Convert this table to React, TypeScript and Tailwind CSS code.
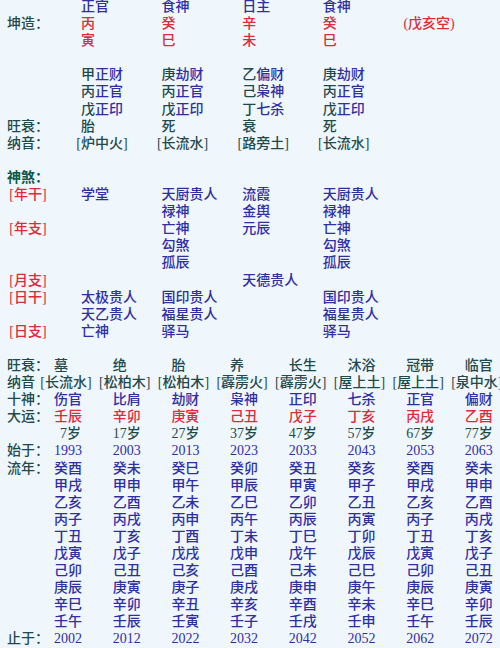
import React from "react";

const STEMS = "甲乙丙丁戊己庚辛壬癸";
const BRANCHES = "子丑寅卯辰巳午未申酉戌亥";

const ganzhi = (y: number) => STEMS[(y - 4) % 10] + BRANCHES[(y - 4) % 12];

const TEAL = "text-[#1f4a4c]";
const BLUE = "text-[#2f2fa4]";
const RED = "text-[#de2a3a]";

type Cell = React.ReactNode;

function Br({ children }: { children: React.ReactNode }) {
  return (
    <>
      <span className="inline-block w-[7px] text-right">[</span>
      {children}
      <span className="inline-block w-[7px] text-left">]</span>
    </>
  );
}

// top half: 4 pillars, 80.6px columns
function TopRow({ label, cells, color, labelColor = TEAL, shift = false }: { label?: Cell; cells: Cell[]; color: string; labelColor?: string; shift?: boolean }) {
  return (
    <div className="flex h-[17.1px]">
      <div className={`w-[74px] shrink-0 ${labelColor}`}>{label}</div>
      {cells.map((c, i) => (
        <div key={i} className={`w-[80.6px] shrink-0 whitespace-nowrap ${color} ${shift ? "-ml-[7px] mr-[7px]" : ""}`}>
          {c}
        </div>
      ))}
    </div>
  );
}

function Empty() {
  return <div className="h-[17.1px]" />;
}

function Stem({ s, rest }: { s: string; rest: string }) {
  return (
    <>
      <span className={TEAL}>{s}</span>
      <span className={BLUE}>{rest}</span>
    </>
  );
}

// bottom half: 8 luck columns, 58.7px columns
function LuckRow({ label, cells, color, labelW = "w-[47px]" }: { label?: Cell; cells: Cell[]; color: string; labelW?: string }) {
  return (
    <div className="flex h-[17.1px]">
      <div className={`${labelW} shrink-0 ${TEAL}`}>{label}</div>
      {cells.map((c, i) => (
        <div key={i} className={`w-[58.7px] shrink-0 whitespace-nowrap ${color}`}>
          {c}
        </div>
      ))}
    </div>
  );
}

const shensha: [string | null, string[]][] = [
  ["年干", ["学堂", "天厨贵人", "流霞", "天厨贵人"]],
  [null, ["", "禄神", "金舆", "禄神"]],
  ["年支", ["", "亡神", "元辰", "亡神"]],
  [null, ["", "勾煞", "", "勾煞"]],
  [null, ["", "孤辰", "", "孤辰"]],
  ["月支", ["", "", "天德贵人", ""]],
  ["日干", ["太极贵人", "国印贵人", "", "国印贵人"]],
  [null, ["天乙贵人", "福星贵人", "", "福星贵人"]],
  ["日支", ["亡神", "驿马", "", "驿马"]],
];

const starts = [1993, 2003, 2013, 2023, 2033, 2043, 2053, 2063];

export default function App() {
  return (
    <div
      className="w-[500px] h-[648px] overflow-hidden bg-[#eff6fc] pl-[7px] text-[14px] leading-[17.1px] font-medium"
      style={{ fontFamily: '"Liberation Serif", "Noto Sans CJK SC", serif' }}
    >
      <div className="-mt-[2px]">
        <TopRow cells={["正官", "食神", "日主", "食神"]} color={BLUE} />
        <TopRow label="坤造：" cells={["丙", "癸", "辛", "癸", "(戊亥空)"]} color={RED} />
        <TopRow cells={["寅", "巳", "未", "巳"]} color={RED} />
        <Empty />
        <TopRow cells={[<Stem s="甲" rest="正财" />, <Stem s="庚" rest="劫财" />, <Stem s="乙" rest="偏财" />, <Stem s="庚" rest="劫财" />]} color={BLUE} />
        <TopRow cells={[<Stem s="丙" rest="正官" />, <Stem s="丙" rest="正官" />, <Stem s="己" rest="枭神" />, <Stem s="丙" rest="正官" />]} color={BLUE} />
        <TopRow cells={[<Stem s="戊" rest="正印" />, <Stem s="戊" rest="正印" />, <Stem s="丁" rest="七杀" />, <Stem s="戊" rest="正印" />]} color={BLUE} />
        <TopRow label="旺衰：" cells={["胎", "死", "衰", "死"]} color={TEAL} />
        <TopRow
          label="纳音："
          cells={["炉中火", "长流水", "路旁土", "长流水"].map((n) => <Br>{n}</Br>)}
          color={TEAL}
          shift
        />
        <Empty />

        <div className="h-[17.1px] text-[#0e5848] font-semibold">神煞：</div>
        {shensha.map(([l, cs], i) => (
          <TopRow key={i} label={l ? <Br>{l}</Br> : null} labelColor={RED} cells={cs} color={BLUE} />
        ))}
        <Empty />

        <LuckRow label="旺衰：" cells={["墓", "绝", "胎", "养", "长生", "沐浴", "冠带", "临官"]} color={TEAL} />
        <LuckRow
          label="纳音"
          labelW="w-[31px]"
          cells={["长流水", "松柏木", "松柏木", "霹雳火", "霹雳火", "屋上土", "屋上土", "泉中水"].map((n) => <Br>{n}</Br>)}
          color={TEAL}
        />
        <LuckRow label="十神：" cells={["伤官", "比肩", "劫财", "枭神", "正印", "七杀", "正官", "偏财"]} color={BLUE} />
        <LuckRow label="大运：" cells={["壬辰", "辛卯", "庚寅", "己丑", "戊子", "丁亥", "丙戌", "乙酉"]} color={RED} />
        <LuckRow
          cells={[7, 17, 27, 37, 47, 57, 67, 77].map((a) => (
            <span className={a < 10 ? "pl-[6px]" : ""}>{a}岁</span>
          ))}
          color={TEAL}
        />
        <LuckRow label="始于：" cells={starts.map((y) => y)} color={BLUE} />
        {Array.from({ length: 10 }, (_, k) => (
          <LuckRow key={k} label={k === 0 ? "流年：" : null} cells={starts.map((y) => ganzhi(y + k))} color={BLUE} />
        ))}
        <LuckRow label="止于：" cells={starts.map((y) => y + 9)} color={BLUE} />
      </div>
    </div>
  );
}
